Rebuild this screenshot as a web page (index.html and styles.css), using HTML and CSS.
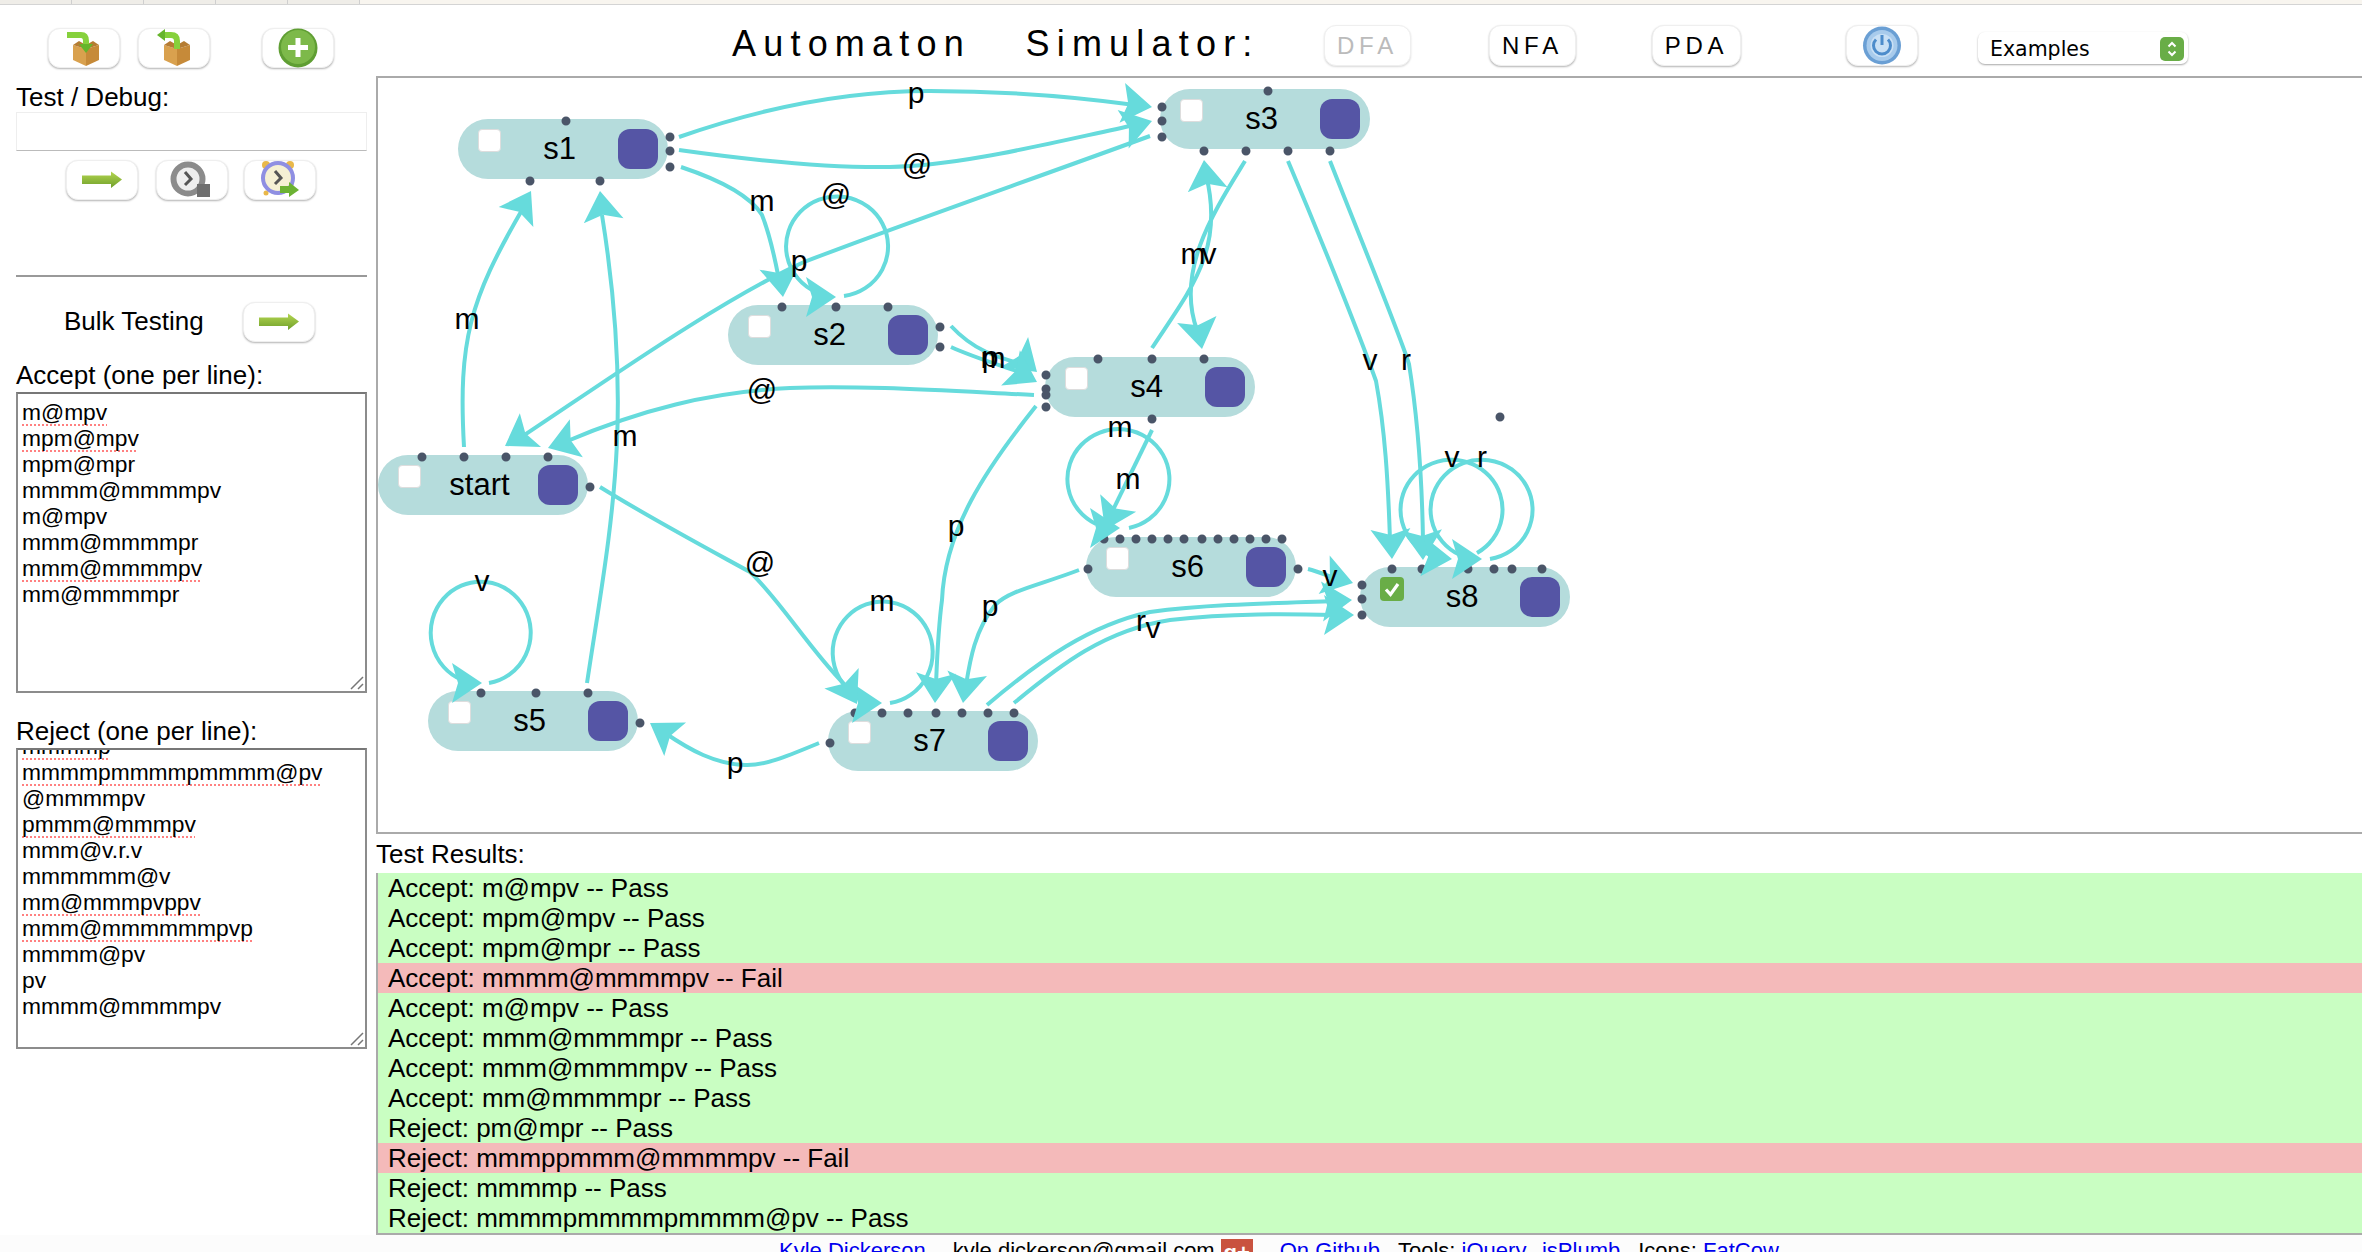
FILE: index.html
```html
<!DOCTYPE html>
<html>
	<head>
		<meta charset="UTF-8">
		<title>Automaton Simulator</title>
		<link rel="stylesheet" href="styles.css">
	</head>
	<body>
		<div class="tabstrip"><span></span><span></span><span></span><span></span><span></span></div>
		<div class="page">
			<div class="sidebar">
				<div class="toolrow">
					<button class="btn">
						<svg class="icon" viewBox="0 0 72 40"><use href="#box"/><path class="arrowline" d="M19 7H33Q38 7 38 13V19"/><polygon class="arrowfill" points="31,16 45,16 38,25"/></svg>
					</button>
					<button class="btn">
						<svg class="icon" viewBox="0 0 72 40"><use href="#box" x="1"/><path class="arrowline" d="M39 21V13Q39 7 33 7H26"/><polygon class="arrowfill" points="27,1 27,13 19,7"/></svg>
					</button>
					<button class="btn btn-add">
						<svg class="icon" viewBox="0 0 72 40"><circle cx="36" cy="20" r="19.5" fill="#5f9e33"/><circle cx="36" cy="19" r="17" fill="#7db94a"/><path d="M33.5 10h5v7h7.5v5h-7.5v7h-5v-7h-7.5v-5h7.5z" fill="#fff"/></svg>
					</button>
				</div>
				<div class="label">Test / Debug:</div>
				<div class="testinput"></div>
				<div class="toolrow toolrow-run">
					<button class="btn">
						<svg class="icon" viewBox="0 0 72 40"><use href="#go"/></svg>
					</button>
					<button class="btn">
						<svg class="icon" viewBox="0 0 72 40"><circle cx="32" cy="19" r="14.500" fill="#eee" stroke="#8b8b8b" stroke-width="6"/><path d="M29 12l6 7-6 6" fill="none" stroke="#555" stroke-width="3"/><rect x="41" y="24" width="13" height="13" fill="#6f6f6f"/></svg>
					</button>
					<button class="btn btn-alarm">
						<svg class="icon" viewBox="0 0 72 40"><circle cx="22" cy="5" r="4" fill="#e9b84a"/><circle cx="46" cy="5" r="4" fill="#e9b84a"/><circle cx="22" cy="33" r="2.5" fill="#e9b84a"/><circle cx="34" cy="18" r="15" fill="#f5f0d4" stroke="#8f8fe2" stroke-width="4"/><path d="M31 11l6 7-6 6" fill="none" stroke="#555" stroke-width="3"/><path d="M36 26h9v-4l10 8-10 7v-4h-9z" fill="#6cb233"/></svg>
					</button>
				</div>
				<div class="rule"></div>
				<div class="bulkrow">
					<span class="label">Bulk Testing</span>
					<button class="btn">
						<svg class="icon" viewBox="0 0 72 40"><use href="#go"/></svg>
					</button>
				</div>
				<div class="label label-accept">Accept (one per line):</div>
				<div class="textbox">
					<div class="line typo">m@mpv</div>
					<div class="line typo">mpm@mpv</div>
					<div class="line">mpm@mpr</div>
					<div class="line">mmmm@mmmmpv</div>
					<div class="line">m@mpv</div>
					<div class="line">mmm@mmmmpr</div>
					<div class="line typo">mmm@mmmmpv</div>
					<div class="line">mm@mmmmpr</div>
					<svg class="grip" viewBox="0 0 14 14"><path d="M1 13L13 1M8 13L13 8" stroke="#777" stroke-width="1.5"/></svg>
				</div>
				<div class="label label-reject">Reject (one per line):</div>
				<div class="textbox textbox-scrolled">
					<div class="line typo">mmmmp</div>
					<div class="line typo">mmmmpmmmmpmmmm@pv</div>
					<div class="line">@mmmmpv</div>
					<div class="line typo">pmmm@mmmpv</div>
					<div class="line">mmm@v.r.v</div>
					<div class="line">mmmmmm@v</div>
					<div class="line typo">mm@mmmpvppv</div>
					<div class="line typo">mmm@mmmmmmpvp</div>
					<div class="line">mmmm@pv</div>
					<div class="line">pv</div>
					<div class="line">mmmm@mmmmpv</div>
					<svg class="grip" viewBox="0 0 14 14"><path d="M1 13L13 1M8 13L13 8" stroke="#777" stroke-width="1.5"/></svg>
				</div>
			</div>
			<div class="main">
				<div class="header">
					<div class="title">Automaton   Simulator:</div>
					<button class="btn mode mode-dfa">DFA</button>
					<button class="btn mode mode-nfa">NFA</button>
					<button class="btn mode mode-pda">PDA</button>
					<button class="btn btn-power">
						<svg class="icon" viewBox="0 0 72 41"><circle cx="36" cy="20.5" r="19" fill="#6a9fd4"/><circle cx="36" cy="20.5" r="15.5" fill="#a8cbec"/><circle cx="36" cy="20.5" r="11.500" fill="#c9e0f5"/><path d="M30 14.500a8.500 8.500 0 1 0 12 0M36 10v10" fill="none" stroke="#4d8ccb" stroke-width="3"/></svg>
					</button>
					<div class="select">
						<span>Examples</span>
						<svg class="stepper" viewBox="0 0 24 24"><rect width="24" height="24" rx="5" fill="#69ad47"/><path d="M8.5 9.5L12 6l3.5 3.5M8.5 14.5L12 18l3.5-3.5" fill="none" stroke="#fff" stroke-width="2"/></svg>
					</div>
				</div>
				<div class="canvas">
					<div class="plane">
						<div class="node n-s1"><span class="check"></span><span>s1</span><span class="handle"></span></div>
						<div class="node n-s2"><span class="check"></span><span>s2</span><span class="handle"></span></div>
						<div class="node n-s3"><span class="check"></span><span>s3</span><span class="handle"></span></div>
						<div class="node n-s4"><span class="check"></span><span>s4</span><span class="handle"></span></div>
						<div class="node n-start"><span class="check"></span><span>start</span><span class="handle"></span></div>
						<div class="node n-s5"><span class="check"></span><span>s5</span><span class="handle"></span></div>
						<div class="node n-s6"><span class="check"></span><span>s6</span><span class="handle"></span></div>
						<div class="node n-s7"><span class="check"></span><span>s7</span><span class="handle"></span></div>
						<div class="node n-s8">
							<span class="check check-on"><svg viewBox="0 0 24 24"><path d="M6 12.5l4.5 5L18 7" fill="none" stroke="#fff" stroke-width="3.2"/></svg></span>
							<span>s8</span><span class="handle"></span>
						</div>
						<svg class="wires">
							<defs>
								<polygon id="head" points="0,0 -30,-20 -24,0 -30,20"/>
							</defs>
							<!-- endpoints -->
							<path class="dots" d="M566 121h0M670 137h0M670 151h0M670 167h0M530 181h0M600 181h0
								M1268 91h0M1162 107h0M1162 121h0M1162 137h0M1204 151h0M1246 151h0M1288 151h0M1330 151h0
								M782 307h0M836 307h0M888 307h0M940 327h0M940 347h0
								M1098 359h0M1152 359h0M1204 359h0M1046 375h0M1046 389h0M1046 395h0M1046 407h0M1152 419h0
								M422 457h0M464 457h0M506 457h0M548 457h0M590 487h0
								M481 693h0M536 693h0M588 693h0M640 723h0
								M855 713h0M882 713h0M908 713h0M936 713h0M962 713h0M988 713h0M1014 713h0M830 743h0
								M1104 539h0M1120 539h0M1136 539h0M1152 539h0M1168 539h0M1184 539h0M1202 539h0M1218 539h0M1234 539h0M1250 539h0M1266 539h0M1282 539h0M1088 569h0M1298 569h0
								M1392 569h0M1422 569h0M1468 569h0M1494 569h0M1512 569h0M1542 569h0M1362 585h0M1362 599h0M1362 615h0
								M1500 417h0"/>
							<!-- transitions -->
							<path class="wire" d="M679 137C770 105 850 91 930 91C1000 91 1070 96 1135 105"/>
							<path class="wire" d="M679 150C750 160 830 168 890 167C960 166 1050 143 1135 125"/>
							<path class="wire" d="M1150 136C1030 180 900 225 804 262C720 300 600 385 520 438"/>
							<path class="wire" d="M464 447C458 340 470 300 522 210"/>
							<path class="wire" d="M587 683C610 530 635 420 602 215"/>
							<path class="wire" d="M681 167C720 180 750 195 762 215C772 240 776 265 780 285"/>
							<path class="wire" d="M844 296A51 50 0 1 0 816 292"/>
							<path class="wire" d="M951 326C975 352 1000 358 1025 365"/>
							<path class="wire" d="M951 347C975 358 1000 365 1025 374"/>
							<path class="wire" d="M1034 395C950 391 860 385 790 388C710 392 640 410 565 442"/>
							<path class="wire" d="M1245 161C1215 210 1175 270 1197 330"/>
							<path class="wire" d="M1152 348C1190 290 1225 250 1206 175"/>
							<path class="wire" d="M1288 161C1330 260 1365 350 1376 381C1385 430 1388 480 1390 540"/>
							<path class="wire" d="M1330 161C1365 250 1400 335 1409 364C1418 420 1422 480 1423 540"/>
							<path class="wire" d="M1477 553A51 50 0 1 0 1430 555"/>
							<path class="wire" d="M1490 559A51 50 0 1 0 1460 555"/>
							<path class="wire" d="M1152 430L1112 512"/>
							<path class="wire" d="M1129 528A51 50 0 1 0 1096 524"/>
							<path class="wire" d="M1036 406C985 470 945 530 942 600C938 630 937 660 936 685"/>
							<path class="wire" d="M890 703A50 51 0 1 0 860 698"/>
							<path class="wire" d="M600 487C650 518 710 550 750 572C780 600 810 650 845 685"/>
							<path class="wire" d="M1079 570C1040 585 1010 590 995 605C975 630 970 660 966 685"/>
							<path class="wire" d="M987 705C1040 660 1090 625 1150 612C1210 604 1280 603 1335 601"/>
							<path class="wire" d="M1014 703C1060 665 1105 630 1170 620C1230 613 1290 614 1335 615"/>
							<path class="wire" d="M1308 569C1320 572 1330 577 1340 580"/>
							<path class="wire" d="M819 743C790 755 765 766 745 765C715 764 690 750 665 733"/>
							<path class="wire" d="M489 683A50 51 0 1 0 462 680"/>
							<!-- arrow heads -->
							<use class="head" href="#head" transform="translate(1152 107) rotate(8)"/>
							<use class="head" href="#head" transform="translate(1152 121) rotate(-16)"/>
							<use class="head" href="#head" transform="translate(505 446) rotate(148)"/>
							<use class="head" href="#head" transform="translate(531 191) rotate(-60)"/>
							<use class="head" href="#head" transform="translate(600 191) rotate(-97)"/>
							<use class="head" href="#head" transform="translate(783 297) rotate(83)"/>
							<use class="head" href="#head" transform="translate(836 297)"/>
							<use class="head" href="#head" transform="translate(1037 372) rotate(42)"/>
							<use class="head" href="#head" transform="translate(1037 382) rotate(28)"/>
							<use class="head" href="#head" transform="translate(548 448) rotate(161)"/>
							<use class="head" href="#head" transform="translate(1202 349) rotate(80)"/>
							<use class="head" href="#head" transform="translate(1204 160) rotate(-97)"/>
							<use class="head" href="#head" transform="translate(1392 559) rotate(87)"/>
							<use class="head" href="#head" transform="translate(1423 560) rotate(88)"/>
							<use class="head" href="#head" transform="translate(1452 559) rotate(5)"/>
							<use class="head" href="#head" transform="translate(1482 559)"/>
							<use class="head" href="#head" transform="translate(1105 530) rotate(116)"/>
							<use class="head" href="#head" transform="translate(1120 528)"/>
							<use class="head" href="#head" transform="translate(935 703) rotate(92)"/>
							<use class="head" href="#head" transform="translate(882 703)"/>
							<use class="head" href="#head" transform="translate(857 704) rotate(59)"/>
							<use class="head" href="#head" transform="translate(963 703) rotate(98)"/>
							<use class="head" href="#head" transform="translate(1352 600) rotate(-3)"/>
							<use class="head" href="#head" transform="translate(1354 615)"/>
							<use class="head" href="#head" transform="translate(1353 583) rotate(16)"/>
							<use class="head" href="#head" transform="translate(650 723) rotate(213)"/>
							<use class="head" href="#head" transform="translate(482 683)"/>
							<!-- labels -->
							<text x="916" y="103">p</text>
							<text x="917" y="175">@</text>
							<text x="762" y="211">m</text>
							<text x="836" y="205">@</text>
							<text x="799" y="271">p</text>
							<text x="467" y="329">m</text>
							<text x="625" y="446">m</text>
							<text x="762" y="400">@</text>
							<text x="990" y="367">p</text>
							<text x="993" y="368">m</text>
							<text x="1120" y="437">m</text>
							<text x="1128" y="489">m</text>
							<text x="1193" y="264">m</text>
							<text x="1209" y="264">v</text>
							<text x="1370" y="370">v</text>
							<text x="1406" y="370">r</text>
							<text x="1452" y="467">v</text>
							<text x="1482" y="467">r</text>
							<text x="1330" y="586">v</text>
							<text x="760" y="573">@</text>
							<text x="482" y="591">v</text>
							<text x="882" y="611">m</text>
							<text x="956" y="536">p</text>
							<text x="990" y="616">p</text>
							<text x="1141" y="631">r</text>
							<text x="1153" y="638">v</text>
							<text x="735" y="773">p</text>
						</svg>
					</div>
				</div>
				<div class="label label-results">Test Results:</div>
				<div class="results">
					<div class="pass">Accept: m@mpv -- Pass</div>
					<div class="pass">Accept: mpm@mpv -- Pass</div>
					<div class="pass">Accept: mpm@mpr -- Pass</div>
					<div class="fail">Accept: mmmm@mmmmpv -- Fail</div>
					<div class="pass">Accept: m@mpv -- Pass</div>
					<div class="pass">Accept: mmm@mmmmpr -- Pass</div>
					<div class="pass">Accept: mmm@mmmmpv -- Pass</div>
					<div class="pass">Accept: mm@mmmmpr -- Pass</div>
					<div class="pass">Reject: pm@mpr -- Pass</div>
					<div class="fail">Reject: mmmppmmm@mmmmpv -- Fail</div>
					<div class="pass">Reject: mmmmp -- Pass</div>
					<div class="pass">Reject: mmmmpmmmmpmmmm@pv -- Pass</div>
				</div>
			</div>
		</div>
		<div class="footer">
			<a href="#">Kyle Dickerson</a>
			<span class="f-wide">kyle.dickerson@gmail.com</span>
			<span class="gplus">g+</span>
			<a class="f-wide" href="#">On Github</a>
			<span class="f-tools">Tools: <a href="#">jQuery</a>, <a class="f-next" href="#">jsPlumb</a></span>
			<span class="f-tools">Icons: <a href="#">FatCow</a></span>
		</div>
		<!-- shared icon parts -->
		<svg class="sprites">
			<defs>
				<linearGradient id="goFill" x1="0" y1="0" x2="0" y2="1">
					<stop offset="0" stop-color="#b4d651"/>
					<stop offset="1" stop-color="#6f9f2a"/>
				</linearGradient>
				<g id="go"><path d="M16 15.500H45V11.500L56 19.500L45 28V24H16z" fill="url(#goFill)"/></g>
				<g id="box">
					<path d="M25 17L38 21V38L25 32z" fill="#d9a14e"/>
					<path d="M51 17L38 21V38L51 32z" fill="#c68a39"/>
					<path d="M25 17L31 13L38 17L45 13L51 17L38 21z" fill="#b57c33"/>
				</g>
			</defs>
		</svg>
	</body>
</html>
```

FILE: styles.css
```css
*{
	box-sizing: border-box;
}
html,body{
	height: 1252px;
	overflow: hidden;
}
body{
	margin: 0;
	background: #fff;
	color: #000;
	font-size: 26px;
	font-family: "Liberation Sans", Arial, sans-serif;
}
.tabstrip {
	display: flex;
	height: 5px;
	background: #f8f5ef;
	border-bottom: 1px solid #d4d4d4;
}
.tabstrip span {
	width: 72px;
	background: #efede8;
	border-right: 1px solid #cfcfcf;
}
.page {
	display: grid;
	grid-template-columns: 376px 1fr;
}
.sprites {
	position: absolute;
	width: 0;
	height: 0;
}

/* left column */
.sidebar {
	padding: 23px 9px 0 16px;
}
.toolrow {
	display: flex;
	gap: 18px;
	padding-left: 32px;
}
.btn-add {
	margin-left: 34px;
}
.btn {
	display: block;
	width: 72px;
	height: 40px;
	padding: 0;
	background: #fff;
	border: 1px solid #efefef;
	border-radius: 12px;
	box-shadow: 0 1px 2px rgba(0,0,0,.3);
	font-family: inherit;
}
.icon {
	display: block;
	width: 72px;
	height: 40px;
	margin: -1px;
	overflow: visible;
}
.arrowline {
	fill: none;
	stroke: #86d13c;
	stroke-width: 6;
}
.arrowfill {
	fill: #66b52b;
}
.label {
	line-height: 30px;
}
.sidebar > .label:nth-child(2) {
	margin-top: 14px;
}
.testinput {
	height: 39px;
	background: #fff;
	border: 1px solid #eee;
	border-bottom-color: #bbb;
}
.toolrow-run {
	padding-left: 50px;
	margin-top: 9px;
}
.btn-alarm {
	margin-left: -2px;
}
.rule {
	height: 2px;
	margin-top: 75px;
	background: #999;
}
.bulkrow {
	display: flex;
	align-items: center;
	gap: 39px;
	padding-left: 48px;
	margin-top: 25px;
}
.bulkrow .label {
	margin-top: -3px;
}
.label-accept {
	margin-top: 18px;
}
.label-reject {
	margin-top: 23px;
}
.textbox {
	position: relative;
	height: 301px;
	margin-top: 2px;
	padding: 5px 4px 0;
	overflow: hidden;
	background: #fff;
	border: 2px solid #8c8c8c;
	border-top-color: #777;
	font-size: 22.800px;
}
.textbox-scrolled {
	padding-top: 0;
}
.textbox-scrolled .line:first-child {
	margin-top: -17px;
}
.line {
	height: 26px;
	line-height: 26px;
}
.typo {
	text-decoration: underline dotted #ff8080 2px;
	text-underline-offset: 4px;
	text-decoration-skip-ink: none;
}
.grip {
	position: absolute;
	right: 1px;
	bottom: 1px;
	width: 14px;
	height: 14px;
}

/* right column */
.header {
	display: flex;
	align-items: flex-start;
	height: 71px;
	padding-top: 20px;
}
.title {
	width: 528px;
	margin: -1px 0 0 356px;
	line-height: 40px;
	font-size: 36px;
	letter-spacing: 0.2em;
	word-spacing: 1px;
	white-space: pre;
}
.mode {
	width: 87px;
	height: 41px;
	font-size: 24px;
	letter-spacing: 0.2em;
	color: #000;
}
.mode-dfa {
	margin-left: 64px;
	color: #bbb;
	box-shadow: 0 1px 2px rgba(0,0,0,.15);
}
.mode-nfa {
	margin-left: 78px;
}
.mode-pda {
	width: 89px;
	margin-left: 76px;
}
.btn-power {
	height: 41px;
	margin-left: 105px;
}
.btn-power .icon {
	height: 41px;
}
.select {
	display: flex;
	align-items: center;
	justify-content: space-between;
	width: 210px;
	height: 32px;
	margin: 7px 0 0 60px;
	padding: 1px 4px 0 12px;
	background: #fff;
	border-radius: 7px;
	box-shadow: 0 1px 2px rgba(0,0,0,.35);
	font-size: 20.500px;
	font-family: "DejaVu Sans", sans-serif;
}
.stepper {
	width: 24px;
	height: 24px;
}
.canvas {
	position: relative;
	height: 758px;
	overflow: hidden;
	border: 2px solid #aaa;
	border-right: 0;
}
.plane {
	position: absolute;
	left: -378px;
	top: -78px;
	width: 2362px;
	height: 1252px;
}
.wires {
	position: absolute;
	left: 0;
	top: 0;
	width: 2362px;
	height: 1252px;
}
.dots {
	fill: none;
	stroke: #4a5568;
	stroke-width: 9;
	stroke-linecap: round;
}
.wire {
	fill: none;
	stroke: #66dbdc;
	stroke-width: 4;
}
.head {
	fill: #66dbdc;
}
.wires text {
	font-size: 30px;
	text-anchor: middle;
}

/* states */
.node {
	position: absolute;
	display: flex;
	align-items: center;
	justify-content: space-between;
	width: 210px;
	height: 60px;
	padding: 0 10px 0 20px;
	background: #b5dcdc;
	border-radius: 30px;
	font-size: 31px;
}
.n-s1 { left: 458px; top: 119px; }
.n-s2 { left: 728px; top: 305px; }
.n-s3 { left: 1160px; top: 89px; }
.n-s4 { left: 1045px; top: 357px; }
.n-start { left: 378px; top: 455px; }
.n-s5 { left: 428px; top: 691px; }
.n-s6 { left: 1086px; top: 537px; }
.n-s7 { left: 828px; top: 711px; }
.n-s8 { left: 1360px; top: 567px; }
.check {
	align-self: flex-start;
	width: 23px;
	height: 23px;
	margin-top: 10px;
	background: #fff;
	border: 1px solid #ddd;
	border-radius: 4px;
}
.check-on {
	width: 24px;
	height: 24px;
	background: #69ad47;
	border: 0;
}
.check-on svg {
	display: block;
}
.handle {
	width: 40px;
	height: 40px;
	background: #5555a5;
	border-radius: 12px;
}

/* results */
.label-results {
	height: 39px;
	padding-top: 5px;
}
.results {
	border-left: 2px solid #aaa;
	border-bottom: 2px solid #aaa;
}
.results div {
	height: 30px;
	padding-left: 10px;
	line-height: 30px;
}
.pass {
	background: #c9fec2;
}
.fail {
	background: #f4baba;
}

.footer {
	display: flex;
	align-items: flex-start;
	height: 40px;
	padding: 2px 0 0 779px;
	background: #fcfcfc;
	font-size: 22px;
	line-height: 28px;
}
.footer a {
	color: #00e;
}
.f-wide {
	margin-left: 27px;
}
.f-tools {
	margin-left: 18px;
	white-space: pre;
}
.f-next {
	margin-left: 5px;
}
.gplus {
	width: 32px;
	height: 32px;
	margin: 2px 0 0 6px;
	background: #c9523f;
	color: #fff;
	text-align: center;
	font-weight: bold;
}
```
